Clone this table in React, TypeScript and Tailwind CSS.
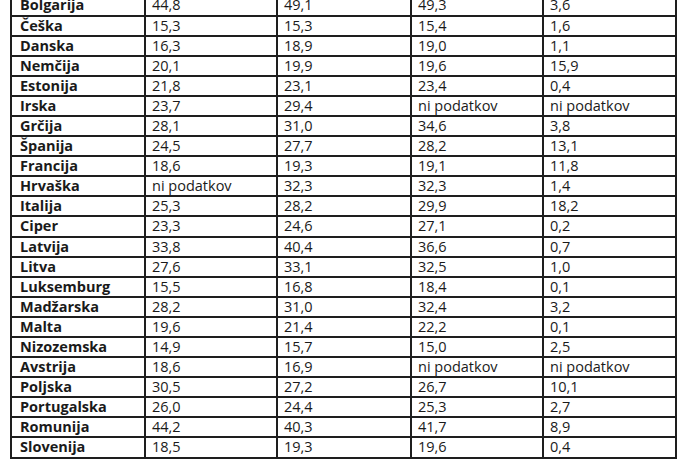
import React from 'react';

const rows: [string, string, string, string, string][] = [
  ['Bolgarija', '44,8', '49,1', '49,3', '3,6'],
  ['Češka', '15,3', '15,3', '15,4', '1,6'],
  ['Danska', '16,3', '18,9', '19,0', '1,1'],
  ['Nemčija', '20,1', '19,9', '19,6', '15,9'],
  ['Estonija', '21,8', '23,1', '23,4', '0,4'],
  ['Irska', '23,7', '29,4', 'ni podatkov', 'ni podatkov'],
  ['Grčija', '28,1', '31,0', '34,6', '3,8'],
  ['Španija', '24,5', '27,7', '28,2', '13,1'],
  ['Francija', '18,6', '19,3', '19,1', '11,8'],
  ['Hrvaška', 'ni podatkov', '32,3', '32,3', '1,4'],
  ['Italija', '25,3', '28,2', '29,9', '18,2'],
  ['Ciper', '23,3', '24,6', '27,1', '0,2'],
  ['Latvija', '33,8', '40,4', '36,6', '0,7'],
  ['Litva', '27,6', '33,1', '32,5', '1,0'],
  ['Luksemburg', '15,5', '16,8', '18,4', '0,1'],
  ['Madžarska', '28,2', '31,0', '32,4', '3,2'],
  ['Malta', '19,6', '21,4', '22,2', '0,1'],
  ['Nizozemska', '14,9', '15,7', '15,0', '2,5'],
  ['Avstrija', '18,6', '16,9', 'ni podatkov', 'ni podatkov'],
  ['Poljska', '30,5', '27,2', '26,7', '10,1'],
  ['Portugalska', '26,0', '24,4', '25,3', '2,7'],
  ['Romunija', '44,2', '40,3', '41,7', '8,9'],
  ['Slovenija', '18,5', '19,3', '19,6', '0,4'],
];

const App: React.FC = () => {
  return (
    <div className="w-[688px] h-[460px] overflow-hidden bg-white">
      <div
        className="ml-[10px] -mt-[5.6px] w-[667px] grid grid-cols-[132px_130px_132px_130px_131px] auto-rows-[18.1px] gap-[2px] p-[2px] bg-[#1e1e1e] text-[14.5px] leading-[18px] text-[#1a1a1a]"
        style={{ fontFamily: '"Open Sans", Lato, sans-serif' }}
      >
        {rows.map((r) => (
          <React.Fragment key={r[0]}>
            <div className="bg-white pl-[8px] font-bold whitespace-nowrap">{r[0]}</div>
            {r.slice(1).map((v, i) => (
              <div key={i} className="bg-white pl-[6px] whitespace-nowrap">
                {v}
              </div>
            ))}
          </React.Fragment>
        ))}
      </div>
    </div>
  );
};

export default App;
